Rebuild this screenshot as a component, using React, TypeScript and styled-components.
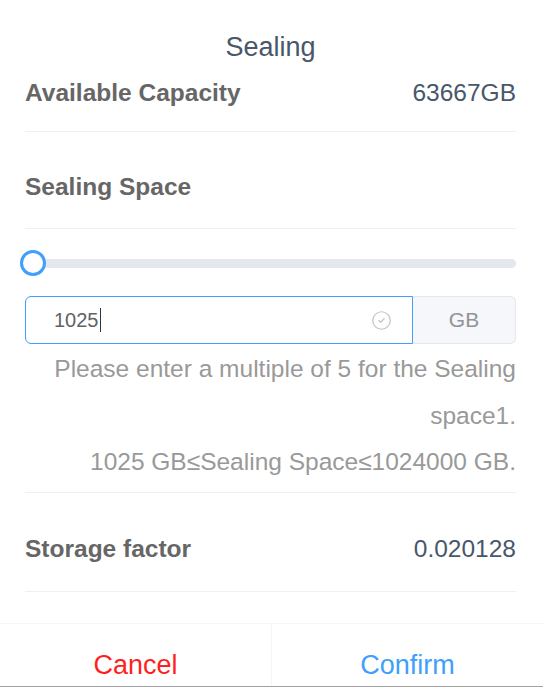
import React from "react";
import styled, { createGlobalStyle } from "styled-components";
import { CircleCheck } from "lucide-react";

const Global = createGlobalStyle`
  html, body { margin: 0; padding: 0; background: #fff; }
  body { font-family: "Liberation Sans", Arial, sans-serif; }
  * { box-sizing: border-box; }
`;

const Dialog = styled.div`
  width: 543px;
  height: 687px;
  background: #fff;
  display: flex;
  flex-direction: column;
  border-bottom: 1px solid #a3a3a3;
`;

const Body = styled.div`
  padding: 0 27px 0 25px;
  display: flex;
  flex-direction: column;
`;

const Title = styled.div`
  padding-top: 30px;
  line-height: 34px;
  font-size: 27px;
  color: #48576a;
  text-align: center;
`;

const Row = styled.div<{ $top: number; $bottom: number }>`
  display: flex;
  justify-content: space-between;
  align-items: center;
  padding: ${(p) => p.$top}px 0 ${(p) => p.$bottom}px;
  border-bottom: 1px solid #f0f0f0;
  line-height: 34px;
`;

const Label = styled.span`
  font-size: 24.5px;
  font-weight: bold;
  color: #666;
`;

const Value = styled.span`
  font-size: 24.5px;
  color: #48576a;
`;

const SliderWrap = styled.div`
  margin-top: 21px;
  padding-left: 8px;
  height: 26px;
  display: flex;
  align-items: center;
`;

const Track = styled.div`
  position: relative;
  flex: 1;
  height: 9px;
  border-radius: 5px;
  background: #e4e7ed;
`;

const Thumb = styled.div`
  position: absolute;
  left: -13px;
  top: 50%;
  width: 26px;
  height: 26px;
  margin-top: -13px;
  border-radius: 50%;
  border: 3px solid #409eff;
  background: #fff;
`;

const InputGroup = styled.div`
  margin-top: 20px;
  display: flex;
  height: 48px;
`;

const InputBox = styled.div`
  flex: 0 0 388px;
  display: flex;
  align-items: center;
  padding: 0 20px 0 28px;
  border: 1px solid #409eff;
  border-radius: 6px 0 0 6px;
  font-size: 20px;
  color: #606266;
`;

const InputText = styled.span`
  flex: 1;
  display: flex;
  align-items: center;
`;

const Caret = styled.span`
  display: inline-block;
  width: 1px;
  height: 24px;
  background: #333;
  margin-left: 1px;
`;

const Append = styled.div`
  flex: 1;
  display: flex;
  align-items: center;
  justify-content: center;
  background: #f5f7fa;
  border: 1px solid #e4e7ed;
  border-left: none;
  border-radius: 0 6px 6px 0;
  font-size: 21px;
  color: #909399;
`;

const Helper = styled.div`
  padding: 2px 0 6px;
  border-bottom: 1px solid #f0f0f0;
  text-align: right;
  font-size: 24.5px;
  line-height: 46.5px;
  color: #999;
`;

const Footer = styled.div`
  margin-top: 31px;
  display: flex;
  border-top: 1px solid #f5f5f5;
  flex: 1;
`;

const FooterButton = styled.div<{ $color: string; $divider?: boolean }>`
  flex: 1;
  display: flex;
  justify-content: center;
  padding-top: 24px;
  font-size: 27px;
  line-height: 34px;
  color: ${(p) => p.$color};
  border-left: ${(p) => (p.$divider ? "1px solid #f5f5f5" : "none")};
`;

export default function App() {
  return (
    <>
      <Global />
      <Dialog>
        <Body>
          <Title>Sealing</Title>
          <Row $top={12} $bottom={21}>
            <Label>Available Capacity</Label>
            <Value>63667GB</Value>
          </Row>
          <Row $top={38} $bottom={24}>
            <Label>Sealing Space</Label>
          </Row>
          <SliderWrap>
            <Track>
              <Thumb />
            </Track>
          </SliderWrap>
          <InputGroup>
            <InputBox>
              <InputText>
                1025
                <Caret />
              </InputText>
              <CircleCheck size={21} strokeWidth={1.4} color="#c0c4cc" />
            </InputBox>
            <Append>GB</Append>
          </InputGroup>
          <Helper>
            <div>Please enter a multiple of 5 for the Sealing space1.</div>
            <div>1025 GB≤Sealing Space≤1024000 GB.</div>
          </Helper>
          <Row $top={39} $bottom={25}>
            <Label>Storage factor</Label>
            <Value>0.020128</Value>
          </Row>
        </Body>
        <Footer>
          <FooterButton $color="#ff1f1f">Cancel</FooterButton>
          <FooterButton $color="#409eff" $divider>
            Confirm
          </FooterButton>
        </Footer>
      </Dialog>
    </>
  );
}
